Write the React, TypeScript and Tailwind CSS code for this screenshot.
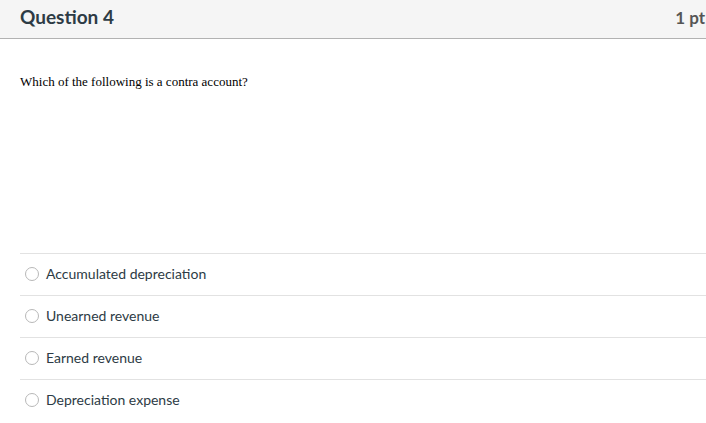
import React from "react";

const answers = [
  "Accumulated depreciation",
  "Unearned revenue",
  "Earned revenue",
  "Depreciation expense",
];

export default function App() {
  return (
    <div className="w-[706px] h-[423px] overflow-hidden bg-white">
      <div className="h-[39px] bg-[#f5f5f5] border-b border-[#b2b2b2] flex items-center justify-between pl-[20px] pr-[1px] pb-[6px]">
        <h2
          className="text-[19px] font-bold text-[#2d3b45] leading-none"
          style={{ fontFamily: "Lato, sans-serif" }}
        >
          Question 4
        </h2>
        <span
          className="text-[17px] font-bold text-[#555] leading-none mt-[3px]"
          style={{ fontFamily: "Lato, sans-serif" }}
        >
          1 pt
        </span>
      </div>
      <div className="pl-[20px]">
        <p
          className="pt-[35px] text-[13px] text-black leading-[15px] h-[214px]"
          style={{ fontFamily: '"Liberation Serif", serif' }}
        >
          Which of the following is a contra account?
        </p>
        <div>
          {answers.map((a) => (
            <div
              key={a}
              className="h-[42px] border-t border-[#e2e2e2] flex items-center gap-[7px] pl-[5px] pb-[2px]"
            >
              <span className="w-[14px] h-[14px] rounded-full border border-[#b8b8b8] bg-white shrink-0" />
              <span
                className="text-[14px] text-[#2d3b45]"
                style={{ fontFamily: "Lato, sans-serif" }}
              >
                {a}
              </span>
            </div>
          ))}
        </div>
      </div>
    </div>
  );
}
